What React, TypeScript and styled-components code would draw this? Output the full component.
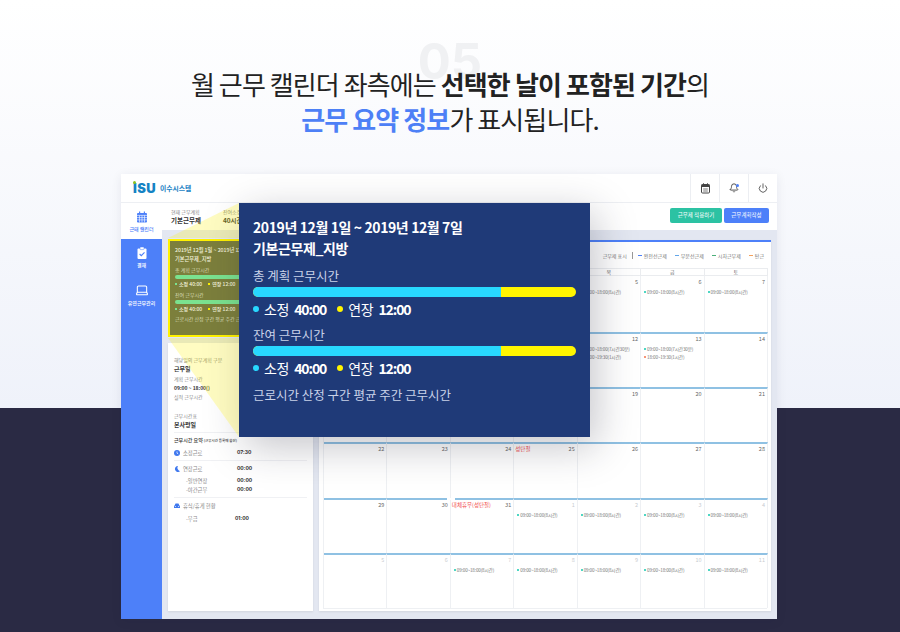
import React from "react";
import styled, { createGlobalStyle } from "styled-components";
import { Bell, Power, Laptop } from "lucide-react";

const Global = createGlobalStyle`
  html, body { margin: 0; padding: 0; }
  body { font-family: "Noto Sans CJK KR", "Noto Sans", sans-serif; }
`;

const Page = styled.div`
  position: relative;
  width: 900px;
  height: 632px;
  overflow: hidden;
  background: linear-gradient(#ffffff 0, #eff2fa 408px, #2a2a44 408px);
  padding-top: 66px;
  box-sizing: border-box;
`;

const Ghost = styled.div`
  position: absolute;
  left: 0;
  right: 0;
  top: 33px;
  text-align: center;
  font: 700 49px/1.2 Inter, sans-serif;
  color: #f0f1f3;
`;

const Heading = styled.h1`
  position: relative;
  margin: 0;
  text-align: center;
  font-size: 26px;
  line-height: 35px;
  font-weight: 400;
  letter-spacing: -0.9px;
  color: #222;
`;

const Strong = styled.b`
  font-weight: 700;
`;

const Accent = styled.b`
  font-weight: 700;
  color: #4d80f6;
`;

const Frame = styled.div`
  position: relative;
  margin: 38px 0 0 121px;
  width: 656px;
  height: 445px;
  background: #e3e7f1;
  display: flex;
  flex-direction: column;
  box-shadow: 0 2px 10px rgba(30, 30, 60, 0.08);
`;

const TopBar = styled.header`
  flex: none;
  height: 29px;
  background: #fff;
  display: flex;
  align-items: center;
  border-bottom: 1px solid #edeff3;
  box-sizing: border-box;
`;

const Logo = styled.div`
  display: flex;
  align-items: center;
  gap: 4px;
  padding-left: 12px;
  flex: 1;
`;

const LogoMark = styled.span`
  position: relative;
  font: 900 13px/1 Inter, sans-serif;
  letter-spacing: 0.4px;
  color: #1583c4;
`;

const LogoDot = styled.i`
  position: absolute;
  left: 0;
  top: -1px;
  width: 3px;
  height: 3px;
  border-radius: 50%;
  background: #8cc21f;
`;

const LogoName = styled.span`
  font-size: 6.8px;
  font-weight: 700;
  color: #1a7fc4;
`;

const TopIcon = styled.div`
  position: relative;
  width: 29px;
  height: 28px;
  border-left: 1px solid #eceef2;
  box-sizing: border-box;
  display: flex;
  align-items: center;
  justify-content: center;
  color: #444;
`;

const Badge = styled.i`
  position: absolute;
  left: 16px;
  top: 10px;
  width: 3px;
  height: 3px;
  border-radius: 50%;
  background: #4d80f9;
`;

const Body = styled.div`
  flex: 1;
  min-height: 0;
  display: flex;
`;

const Side = styled.nav`
  flex: none;
  width: 41px;
  background: #4d80f9;
  display: flex;
  flex-direction: column;
`;

const SideItem = styled.div<{ $active?: boolean }>`
  height: 36px;
  background: ${(p) => (p.$active ? "#fff" : "transparent")};
  color: ${(p) => (p.$active ? "#4d80f9" : "#fff")};
  display: flex;
  flex-direction: column;
  align-items: center;
  padding-top: ${(p) => (p.$active ? "8px" : "7px")};
  margin-bottom: ${(p) => (p.$active ? "1px" : "0")};
  box-sizing: border-box;
  font-size: 5px;
  font-weight: 500;
  line-height: 7px;
  gap: 1.5px;
  white-space: nowrap;
`;

const Main = styled.div`
  flex: 1;
  min-width: 0;
  display: flex;
  flex-direction: column;
`;

const SubBar = styled.div`
  flex: none;
  height: 27px;
  background: #fff;
  display: flex;
  align-items: center;
  padding: 0 8px 2px 9px;
  box-sizing: border-box;
  margin-bottom: 9px;
`;

const PlanInfo = styled.div`
  margin-right: 22px;
  font-size: 5px;
  line-height: 8px;
  color: #888;
`;

const PlanValue = styled.div`
  font-size: 6.5px;
  font-weight: 700;
  color: #333;
`;

const Actions = styled.div`
  margin-left: auto;
  display: flex;
  gap: 2px;
`;

const Action = styled.button<{ $w: number; $color: string }>`
  border: 0;
  border-radius: 2px;
  height: 15px;
  padding: 0;
  width: ${(p) => p.$w}px;
  background: ${(p) => p.$color};
  color: #fff;
  font: 400 5.5px/15px "Noto Sans CJK KR", sans-serif;
`;

const Columns = styled.div`
  flex: 1;
  min-height: 0;
  display: flex;
  gap: 6px;
  padding: 0 6px 8px;
`;

const LeftColumn = styled.aside`
  flex: none;
  width: 145px;
  display: flex;
  flex-direction: column;
  gap: 6px;
`;

const Highlight = styled.section`
  flex: none;
  height: 98px;
  background: #7c7f3c;
  border: 2px solid #fff200;
  border-right: 0;
  box-sizing: border-box;
  padding: 4px 0 0 5px;
  color: #d8dbb4;
  font-size: 5px;
  line-height: 8px;
  white-space: nowrap;
  overflow: hidden;
`;

const HighlightTitle = styled.div`
  color: #f4f4de;
  font-size: 5.2px;
  line-height: 9px;
  font-weight: 500;
`;

const HighlightLabel = styled.div<{ $mt: number }>`
  margin-top: ${(p) => p.$mt}px;
`;

const SmallBar = styled.div`
  width: 130px;
  height: 4px;
  border-radius: 2px;
  background: #7be28f;
  margin-top: 1px;
`;

const SmallStats = styled.div`
  display: flex;
  gap: 6px;
  margin-top: 1px;
  color: #f4f4de;
  font-weight: 500;
`;

const SmallStat = styled.span<{ $dot: string }>`
  &::before {
    content: "";
    display: inline-block;
    width: 2px;
    height: 2px;
    margin-right: 2px;
    vertical-align: 1px;
    background: ${(p) => p.$dot};
  }
`;

const Info = styled.section`
  flex: 1;
  background: #fff;
  padding: 13px 6px 0;
  font-size: 5px;
  line-height: 8px;
  color: #8a8a8a;
  box-shadow: 0 1px 2px rgba(0, 0, 0, 0.08);
`;

const InfoLabel = styled.div<{ $gap?: number }>`
  margin-top: ${(p) => p.$gap ?? 0}px;
  white-space: nowrap;
`;

const InfoValue = styled.div`
  color: #333;
  font-weight: 700;
  font-size: 6px;
  line-height: 9px;
`;

const InfoTime = styled.div`
  color: #333;
  font-weight: 700;
  font-size: 5px;
  line-height: 9px;
`;

const Divider = styled.hr`
  border: 0;
  height: 1px;
  background: #f0f1f4;
  margin: 3px 0;
`;

const SummaryTitle = styled.div`
  font-size: 5px;
  line-height: 8px;
  color: #333;
  font-weight: 500;
  white-space: nowrap;
`;

const SummaryNote = styled.span`
  font-size: 3.5px;
`;

const Row = styled.div<{ $sub?: boolean; $mt?: number }>`
  display: flex;
  align-items: center;
  height: 9px;
  padding-left: ${(p) => (p.$sub ? "12px" : "0")};
  margin-top: ${(p) => p.$mt ?? 3}px;
  color: #888;
  font-size: 5.3px;
  gap: 3px;
  white-space: nowrap;
`;

const RowIcon = styled.svg`
  flex: none;
  width: 6px;
  height: 6px;
`;

const RowLabel = styled.span<{ $w: number }>`
  width: ${(p) => p.$w}px;
`;

const RowValue = styled.b`
  color: #333;
  font: 700 5px/9px Inter, sans-serif;
`;

const CalendarPanel = styled.main`
  flex: 1;
  min-width: 0;
  margin-top: 1px;
  background: #fff;
  border-top: 2px solid #4d80f9;
  box-sizing: border-box;
  padding: 0 4px;
  box-shadow: 0 1px 2px rgba(0, 0, 0, 0.08);
  display: flex;
  flex-direction: column;
`;

const Legend = styled.div`
  flex: none;
  height: 26px;
  display: flex;
  justify-content: flex-end;
  align-items: center;
  gap: 8px;
  font-size: 5px;
  color: #777;
  padding-right: 3px;
  white-space: nowrap;
`;

const LegendLabel = styled.span`
  padding-right: 5px;
  margin-right: -3px;
  border-right: 1px solid #999;
`;

const LegendItem = styled.span<{ $color: string }>`
  &::before {
    content: "";
    display: inline-block;
    width: 4px;
    height: 1px;
    background: ${(p) => p.$color};
    margin-right: 2px;
    vertical-align: 2px;
  }
`;

const Grid = styled.div`
  display: grid;
  grid-template-columns: repeat(7, 63.43px);
  grid-template-rows: 8px 56px repeat(5, 55.2px);
  border-bottom: 1px solid #eef0f3;
  border-left: 1px solid #eef0f3;
`;

const DayHead = styled.div`
  border: 1px solid #eaecef;
  border-left: 0;
  box-sizing: border-box;
  text-align: center;
  font-size: 5px;
  line-height: 6px;
  color: #666;
`;

const Cell = styled.div<{ $line: boolean; $gap?: boolean }>`
  position: relative;
  border-right: 1px solid #eef0f3;
  border-top: ${(p) => (p.$line ? "2px solid #8fc1e3" : "0")};
  box-sizing: border-box;
  padding: ${(p) => (p.$line ? "1px" : "2px")} 2px 0 3px;
  min-width: 0;
  &::before {
    content: "";
    display: ${(p) => (p.$gap ? "block" : "none")};
    position: absolute;
    left: -4px;
    top: -2px;
    width: 8px;
    height: 2px;
    background: #fff;
  }
`;

const DateNo = styled.div<{ $faint?: boolean }>`
  text-align: right;
  font-size: 5.5px;
  line-height: 8px;
  color: ${(p) => (p.$faint ? "#c8cbd0" : "#666")};
`;

const Holiday = styled.span`
  position: absolute;
  left: 1px;
  top: 1px;
  font-size: 5.5px;
  line-height: 8px;
  color: #f2504f;
  white-space: nowrap;
`;

const EventList = styled.div`
  display: flex;
  flex-direction: column;
  gap: 2px;
  margin-top: 3px;
`;

const Event = styled.div<{ $dot: string }>`
  display: flex;
  align-items: center;
  gap: 1px;
  font-size: 4.6px;
  letter-spacing: -0.15px;
  line-height: 6px;
  color: #777;
  white-space: nowrap;
  &::before {
    content: "";
    width: 2px;
    height: 2px;
    border-radius: 50%;
    background: ${(p) => p.$dot};
    flex: none;
  }
`;

const Wedge = styled.svg`
  position: absolute;
  left: 47px;
  top: 29px;
`;

const Popup = styled.section`
  position: absolute;
  left: 118px;
  top: 29px;
  width: 351px;
  height: 234px;
  box-sizing: border-box;
  padding: 14px 14px 0;
  background: #1f3a78;
  color: #fff;
  box-shadow: 6px 10px 38px rgba(30, 30, 50, 0.26);
`;

const PopTitle = styled.div`
  font-size: 14px;
  line-height: 21px;
  font-weight: 700;
  letter-spacing: -0.4px;
`;

const PopLabel = styled.div<{ $mt: number }>`
  margin-top: ${(p) => p.$mt}px;
  font-size: 12.5px;
  line-height: 14px;
  color: #c9d2e8;
`;

const Bar = styled.div`
  margin-top: 4px;
  height: 10px;
  border-radius: 5px;
  overflow: hidden;
  display: flex;
  width: 323px;
  background: #fff500;
`;

const BarFill = styled.div`
  background: #28d8ff;
  height: 100%;
`;

const Stats = styled.div`
  margin-top: 3px;
  display: flex;
  align-items: center;
  height: 18px;
  font-size: 14px;
`;

const Stat = styled.span<{ $dot: string }>`
  display: inline-flex;
  align-items: center;
  margin-right: 11px;
  letter-spacing: -0.3px;
  &::before {
    content: "";
    width: 6px;
    height: 6px;
    border-radius: 50%;
    background: ${(p) => p.$dot};
    margin-right: 5px;
  }
`;

const StatValue = styled.b`
  margin-left: 5px;
  font-weight: 700;
  letter-spacing: -1.1px;
`;

type Ev = { t: string; c: string };
const base = "09:00~18:00(8시간)";
const g = "#12c8b0";

const weeks: { n: number; faint?: boolean; ev?: Ev[]; hol?: string; gap?: boolean }[][] = [
  [1, 2, 3, 4, 5, 6, 7].map((n) => ({ n, ev: n > 1 ? [{ t: base, c: g }] : undefined })),
  [8, 9, 10, 11, 12, 13, 14].map((n) => ({
    n,
    ev:
      n === 12 || n === 13
        ? [
            { t: "09:00~18:00(7시간30분)", c: g },
            { t: "18:00~19:30(1시간)", c: "#f5734b" },
          ]
        : undefined,
  })),
  [15, 16, 17, 18, 19, 20, 21].map((n) => ({ n })),
  [22, 23, 24, 25, 26, 27, 28].map((n) => ({ n, hol: n === 25 ? "성탄절" : undefined })),
  [29, 30, 31, 1, 2, 3, 4].map((n, i) => ({
    n,
    faint: i > 2,
    gap: i === 2,
    hol: i === 2 ? "대체휴무(성탄절)" : undefined,
    ev: i > 2 ? [{ t: base, c: g }] : undefined,
  })),
  [5, 6, 7, 8, 9, 10, 11].map((n, i) => ({
    n,
    faint: true,
    ev: i > 1 ? [{ t: base, c: g }] : undefined,
  })),
];

const days = ["일", "월", "화", "수", "목", "금", "토"];

const HighlightStats = () => (
  <SmallStats>
    <SmallStat $dot="#7be28f">소정 40:00</SmallStat>
    <SmallStat $dot="#fff200">연장 12:00</SmallStat>
  </SmallStats>
);

const CalendarFilled = () => (
  <svg width="12" height="12" viewBox="0 0 12 12">
    <rect x="1" y="2" width="10" height="9.5" rx="1" fill="#4d80f9" />
    <rect x="3" y="0.5" width="1.2" height="2.5" fill="#4d80f9" />
    <rect x="7.8" y="0.5" width="1.2" height="2.5" fill="#4d80f9" />
    <path d="M1 4.4h10M1 6.6h10M1 8.9h10M3.5 4.4v7M6 4.4v7M8.5 4.4v7" stroke="#fff" strokeWidth="0.6" />
  </svg>
);

const ClipboardFilled = () => (
  <svg width="12" height="12" viewBox="0 0 12 12">
    <rect x="1.5" y="1.5" width="9" height="10.5" rx="1" fill="#fff" />
    <rect x="4" y="0" width="4" height="2.6" rx="0.6" fill="#fff" stroke="#4d80f9" strokeWidth="0.5" />
    <path d="M3.6 7l1.7 1.7 3.2-3.4" fill="none" stroke="#4d80f9" strokeWidth="1.1" />
  </svg>
);

const TopCalendar = () => (
  <svg width="11" height="11" viewBox="0 0 11 11">
    <rect x="1.5" y="1.5" width="8" height="8.5" rx="1" fill="none" stroke="#444" strokeWidth="1" />
    <rect x="1.5" y="1.5" width="8" height="2.5" fill="#444" />
    <rect x="3" y="0.3" width="1" height="2" fill="#444" />
    <rect x="7" y="0.3" width="1" height="2" fill="#444" />
    <path d="M3.2 6h4.6M3.2 8h4.6" stroke="#444" strokeWidth="0.7" />
  </svg>
);

const ClockIcon = () => (
  <RowIcon viewBox="0 0 6 6">
    <circle cx="3" cy="3" r="3" fill="#3f78ee" />
    <path d="M3 1.4V3.2L4.2 3.9" fill="none" stroke="#fff" strokeWidth="0.7" />
  </RowIcon>
);

const MoonIcon = () => (
  <RowIcon viewBox="0 0 6 6">
    <path d="M4 0a3 3 0 1 0 2 5.2A3.4 3.4 0 0 1 4 0z" fill="#3f78ee" />
  </RowIcon>
);

const CarIcon = () => (
  <RowIcon viewBox="0 0 6 6">
    <path d="M0 3.4c0-.4.3-.7.6-.8L1.3 1c.1-.3.3-.4.6-.4h2.2c.3 0 .5.1.6.4l.7 1.6c.3.1.6.4.6.8V5H0z" fill="#3f78ee" />
    <circle cx="1.3" cy="3.6" r="0.5" fill="#fff" />
    <circle cx="4.7" cy="3.6" r="0.5" fill="#fff" />
  </RowIcon>
);

export default function App() {
  return (
    <Page>
      <Global />
      <Ghost>05</Ghost>
      <Heading>
        월 근무 캘린더 좌측에는 <Strong>선택한 날이 포함된 기간</Strong>의
        <br />
        <Accent>근무 요약 정보</Accent>가 표시됩니다.
      </Heading>
      <Frame>
        <TopBar>
          <Logo>
            <LogoMark>
              <LogoDot />
              ISU
            </LogoMark>
            <LogoName>이수시스템</LogoName>
          </Logo>
          <TopIcon><TopCalendar /></TopIcon>
          <TopIcon>
            <Bell size={10} strokeWidth={2.2} />
            <Badge />
          </TopIcon>
          <TopIcon><Power size={10} strokeWidth={2} /></TopIcon>
        </TopBar>
        <Body>
          <Side>
            <SideItem $active>
              <CalendarFilled />
              근태 캘린더
            </SideItem>
            <SideItem>
              <ClipboardFilled />
              결재
            </SideItem>
            <SideItem>
              <Laptop size={14} strokeWidth={1.8} />
              유연근무관리
            </SideItem>
          </Side>
          <Main>
            <SubBar>
              <PlanInfo>
                현재 근무계획
                <PlanValue>기본근무제</PlanValue>
              </PlanInfo>
              <PlanInfo>
                잔여소정근로
                <PlanValue>40시간</PlanValue>
              </PlanInfo>
              <Actions>
                <Action $w={52} $color="#2cc2a3">근무제 적용하기</Action>
                <Action $w={45} $color="#4d80f9">근무계획작성</Action>
              </Actions>
            </SubBar>
            <Columns>
              <LeftColumn>
                <Highlight>
                  <HighlightTitle>2019년 12월 1일 ~ 2019년 12월 7일</HighlightTitle>
                  <HighlightTitle>기본근무제_지방</HighlightTitle>
                  <HighlightLabel $mt={3}>총 계획 근무시간</HighlightLabel>
                  <SmallBar />
                  <HighlightStats />
                  <HighlightLabel $mt={3}>잔여 근무시간</HighlightLabel>
                  <SmallBar />
                  <HighlightStats />
                  <HighlightLabel $mt={2}>근로시간 산정 구간 평균 주간 근무시간</HighlightLabel>
                </Highlight>
                <Info>
                  <InfoLabel>해당일의 근무계획 구분</InfoLabel>
                  <InfoValue>근무일</InfoValue>
                  <InfoLabel $gap={2}>계획 근무시간</InfoLabel>
                  <InfoTime>09:00 ~ 18:00()</InfoTime>
                  <InfoLabel $gap={1}>실적 근무시간</InfoLabel>
                  <InfoLabel $gap={11}>근무시간표</InfoLabel>
                  <InfoValue>본사평일</InfoValue>
                  <Divider />
                  <SummaryTitle>
                    근무시간 요약 <SummaryNote>(근무시간 등록때 합산)</SummaryNote>
                  </SummaryTitle>
                  <Row>
                    <ClockIcon />
                    <RowLabel $w={51}>소정근로</RowLabel>
                    <RowValue>07:30</RowValue>
                  </Row>
                  <Divider />
                  <Row>
                    <MoonIcon />
                    <RowLabel $w={51}>연장근로</RowLabel>
                    <RowValue>00:00</RowValue>
                  </Row>
                  <Row $sub>
                    <RowLabel $w={48}>-일반연장</RowLabel>
                    <RowValue>00:00</RowValue>
                  </Row>
                  <Row $sub $mt={0}>
                    <RowLabel $w={48}>-야간근무</RowLabel>
                    <RowValue>00:00</RowValue>
                  </Row>
                  <Divider />
                  <Row>
                    <CarIcon />
                    <RowLabel $w={52}>휴식/휴게 현황</RowLabel>
                  </Row>
                  <Row $sub $mt={4}>
                    <RowLabel $w={46}>-무급</RowLabel>
                    <RowValue>01:00</RowValue>
                  </Row>
                </Info>
              </LeftColumn>
              <CalendarPanel>
                <Legend>
                  <LegendLabel>근무제 표시</LegendLabel>
                  <LegendItem $color="#4d80f9">완전선근제</LegendItem>
                  <LegendItem $color="#63a6e8">부분선근제</LegendItem>
                  <LegendItem $color="#4caf7a">시차근무제</LegendItem>
                  <LegendItem $color="#f5a25d">탄근</LegendItem>
                </Legend>
                <Grid>
                  {days.map((d) => (
                    <DayHead key={d}>{d}</DayHead>
                  ))}
                  {weeks.map((w, i) =>
                    w.map((c, j) => (
                      <Cell key={`${i}-${j}`} $line={i > 0} $gap={c.gap}>
                        {c.hol && <Holiday>{c.hol}</Holiday>}
                        <DateNo $faint={c.faint}>{c.n}</DateNo>
                        {c.ev && (
                          <EventList>
                            {c.ev.map((e) => (
                              <Event key={e.t} $dot={e.c}>{e.t}</Event>
                            ))}
                          </EventList>
                        )}
                      </Cell>
                    ))
                  )}
                </Grid>
              </CalendarPanel>
            </Columns>
          </Main>
        </Body>
        <Popup>
          <PopTitle>2019년 12월 1일 ~ 2019년 12월 7일</PopTitle>
          <PopTitle>기본근무제_지방</PopTitle>
          <PopLabel $mt={10}>총 계획 근무시간</PopLabel>
          <Bar><BarFill style={{ width: "76.7%" }} /></Bar>
          <Stats>
            <Stat $dot="#28d8ff">소정<StatValue>40:00</StatValue></Stat>
            <Stat $dot="#fff500">연장<StatValue>12:00</StatValue></Stat>
          </Stats>
          <PopLabel $mt={10}>잔여 근무시간</PopLabel>
          <Bar><BarFill style={{ width: "76.7%" }} /></Bar>
          <Stats>
            <Stat $dot="#28d8ff">소정<StatValue>40:00</StatValue></Stat>
            <Stat $dot="#fff500">연장<StatValue>12:00</StatValue></Stat>
          </Stats>
          <PopLabel $mt={11}>근로시간 산정 구간 평균 주간 근무시간</PopLabel>
        </Popup>
        <Wedge width="71" height="234" viewBox="0 0 71 234">
          <polygon points="0,35 71,0 71,35" fill="#fff200" fillOpacity="0.24" />
          <polygon points="0,135 71,135 71,234" fill="#fff200" fillOpacity="0.24" />
        </Wedge>
      </Frame>
    </Page>
  );
}
